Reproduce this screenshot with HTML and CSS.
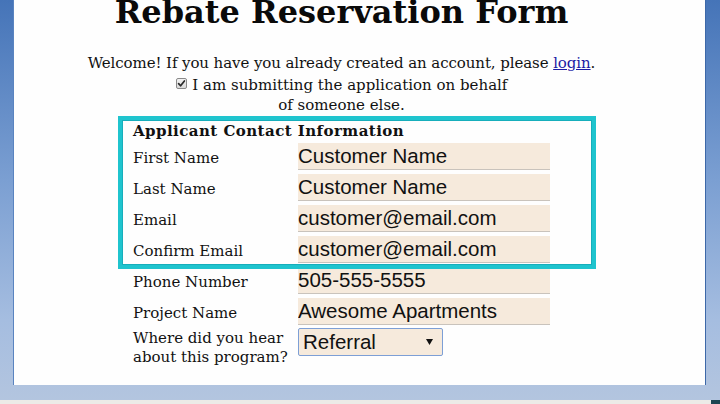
FILE: index.html
```html
<!DOCTYPE html>
<html lang="en">
<head>
<meta charset="utf-8">
<title>Rebate Reservation Form</title>
<link rel="stylesheet" href="styles.css">
</head>
<body>
<div class="screen">
  <div class="desk">
    <div class="page">
      <div class="content">
        <h1 class="title">Rebate Reservation Form</h1>
        <p class="welcome">Welcome! If you have you already created an account, please <a class="link" href="#">login</a>.</p>
        <p class="behalf"><svg class="check" width="11" height="11" viewBox="0 0 11 11"><defs><linearGradient id="cg" x1="0" y1="0" x2="0" y2="1"><stop offset="0" stop-color="#f4f4f4"/><stop offset="1" stop-color="#d9d9d9"/></linearGradient></defs><rect x="0.5" y="0.5" width="10" height="10" rx="1.5" fill="url(#cg)" stroke="#8a8a8a"/><path d="M2.6 5.6 L4.6 7.8 L8.4 2.9" fill="none" stroke="#2a2a2a" stroke-width="1.7" stroke-linecap="round" stroke-linejoin="round"/></svg> I am submitting the application on behalf<br>of someone else.</p>
        <div class="form">
          <div class="highlight"></div>
          <div class="form-head">Applicant Contact Information</div>
          <div class="grid">
            <label class="lbl">First Name</label>
            <input class="field" type="text" value="Customer Name">
            <label class="lbl">Last Name</label>
            <input class="field" type="text" value="Customer Name">
            <label class="lbl">Email</label>
            <input class="field" type="text" value="customer@email.com">
            <label class="lbl">Confirm Email</label>
            <input class="field" type="text" value="customer@email.com">
            <label class="lbl">Phone Number</label>
            <input class="field" type="text" value="505-555-5555">
            <label class="lbl">Project Name</label>
            <input class="field" type="text" value="Awesome Apartments">
            <label class="lbl lbl-two">Where did you hear<br>about this program?</label>
            <div class="select"><span class="select-text">Referral</span><svg class="arrow" width="7" height="6" viewBox="0 0 7 6"><path d="M0 0 H7 L3.5 6 Z" fill="#111"/></svg></div>
          </div>
        </div>
      </div>
    </div>
  </div>
  <div class="taskbar"><span class="tray"></span></div>
</div>
</body>
</html>
```

FILE: styles.css
```css
* { box-sizing: border-box; }
html, body { margin: 0; padding: 0; }
body {
  width: 720px;
  height: 404px;
  overflow: hidden;
  font-family: "DejaVu Serif", "Liberation Serif", serif;
  font-size: 15px;
  color: #111;
}
.screen {
  width: 720px;
  height: 404px;
  display: flex;
  flex-direction: column;
}
.desk {
  flex: 1;
  display: flex;
  padding: 0 15px 15px 14px;
  background: linear-gradient(to bottom, #4574b8 0%, #7b9fd2 45%, #a5bde0 80%, #b3c5df 100%);
}
.page {
  flex: 1;
  background: #fefefe;
  overflow: hidden;
  box-shadow: 1px 0 0 #3d68a8, -1px 0 0 #5a84c0;
}
.content {
  width: 655px;
}
.title {
  margin: -3px 0 0;
  font-size: 32px;
  line-height: 30px;
  font-weight: bold;
  text-align: center;
  color: #0a0a0a;
}
.welcome {
  margin: 27px 0 0;
  line-height: 18px;
  letter-spacing: -0.09px;
  text-align: center;
}
.link { color: #1b1ba4; }
.behalf {
  margin: 3px 0 0;
  line-height: 20px;
  text-align: center;
}
.check { vertical-align: 1px; margin-right: 1px; }
.form {
  position: relative;
  margin: 7px 0 0 119px;
}
.highlight {
  position: absolute;
  left: -15px;
  top: -6px;
  width: 478px;
  height: 153px;
  border: 4px solid #1fc4ce;
  box-shadow: inset 0 0 0 1px #17aebb;
  pointer-events: none;
}
.form-head {
  font-weight: bold;
  line-height: 19px;
  letter-spacing: 0.45px;
}
.grid {
  display: grid;
  grid-template-columns: 165px 252px;
  grid-auto-rows: minmax(31px, auto);
  align-items: center;
}
.lbl {
  line-height: 20px;
  padding-top: 2px;
}
.lbl-two { line-height: 19px; }
.field {
  display: block;
  width: 252px;
  height: 27px;
  margin: 2px 0;
  padding: 0 0 0 0;
  border: 0;
  border-bottom: 1px solid #c9c3bc;
  background: #f6eadc;
  font-family: "Liberation Sans", Arial, sans-serif;
  font-size: 20.5px;
  color: #111;
  outline: none;
}
.select {
  align-self: start;
  margin-top: 1px;
  width: 145px;
  height: 28px;
  display: flex;
  align-items: center;
  justify-content: space-between;
  padding: 0 9px 0 4px;
  border: 1px solid #7d9fd6;
  border-radius: 2px;
  background: #f6eadc;
  font-family: "Liberation Sans", Arial, sans-serif;
  font-size: 20.5px;
}
.taskbar {
  height: 4px;
  background: #ecebe7;
  display: flex;
  justify-content: flex-end;
}
.tray {
  width: 9px;
  background: #1d4552;
}
```
